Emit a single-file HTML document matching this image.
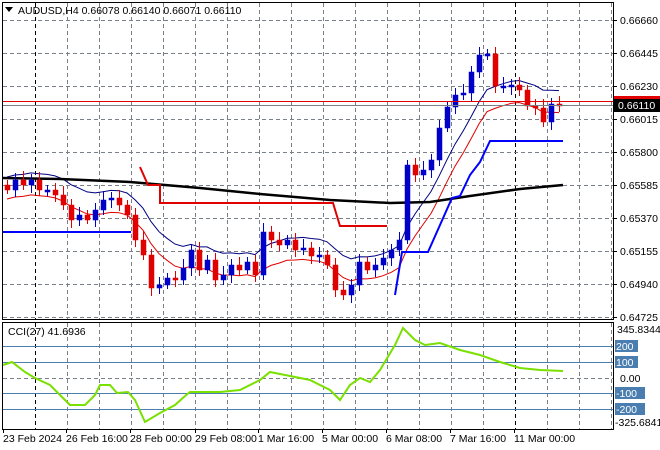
<!DOCTYPE html>
<html><head><meta charset="utf-8"><style>
body{margin:0;background:#fff;width:660px;height:450px;overflow:hidden;font-family:"Liberation Sans",sans-serif}
svg{display:block}
text{font-family:"Liberation Sans",sans-serif;font-size:10.5px;fill:#000}
</style></head><body>
<svg id="s" width="660" height="450" xmlns="http://www.w3.org/2000/svg">
<rect width="660" height="450" fill="#fff"/>
<g id="grid" stroke="#7a8088" stroke-dasharray="4,3" stroke-width="1"></g>
<g id="lines"></g>
<g id="c"></g>
<rect x="2.5" y="2.5" width="611" height="317" fill="none" stroke="#000"/>
<rect x="2.5" y="322.5" width="611" height="107" fill="none" stroke="#000"/>
<line x1="3" y1="101.5" x2="613" y2="101.5" stroke="#e00000"/>
<line x1="3" y1="105.5" x2="613" y2="105.5" stroke="#7a8088"/>
<g id="ax"></g>
<polygon points="5,7 13,7 9,12" fill="#000"/>
<text x="18" y="14">AUDUSD,H4  0.66078 0.66140 0.66071 0.66110</text>
<text x="8" y="335">CCI(27) 41.6936</text>
</svg>
<script>
var NS="http://www.w3.org/2000/svg";
function el(p,t,a,txt){var e=document.createElementNS(NS,t);for(var k in a)e.setAttribute(k,a[k]);if(txt!==undefined)e.textContent=txt;document.getElementById(p).appendChild(e);return e;}
// vertical grid
for(var x=35;x<=611;x+=32){var blk=(x==35||x==515);
 el('grid','line',{x1:x+.5,y1:3,x2:x+.5,y2:319,stroke:blk?'#000':'#7a8088'});
 el('grid','line',{x1:x+.5,y1:323,x2:x+.5,y2:429,stroke:blk?'#000':'#7a8088'});}
var prices=["0.66660","0.66445","0.66230","0.66015","0.65800","0.65585","0.65370","0.65155","0.64940","0.64725"];
for(var i=0;i<10;i++){var y=20+33*i;el('grid','line',{x1:3,y1:y+.5,x2:613,y2:y+.5});
 el('ax','line',{x1:613,y1:y+.5,x2:617,y2:y+.5,stroke:'#000'});
 el('ax','text',{x:620,y:y+4},prices[i]);}
// CCI levels
[[346,"200"],[362,"100"],[393,"-100"],[409,"-200"]].forEach(function(l){
 el('lines','line',{x1:3,y1:l[0]+.5,x2:613,y2:l[0]+.5,stroke:'#4a7eb0'});
 el('ax','rect',{x:615,y:l[0]-6,width:l[1].length*7+2,height:12,fill:'#4a7eb0'});
 el('ax','text',{x:616,y:l[0]+4,style:'fill:#fff'},l[1]);});
el('grid','line',{x1:3,y1:378.5,x2:613,y2:378.5});
el('ax','text',{x:617,y:333},"345.8344");
el('ax','text',{x:620,y:382},"0.00");
el('ax','text',{x:615,y:426},"-325.6841");
// price labels
el('ax','rect',{x:614,y:96,width:46,height:8,fill:'#e00000'});
el('ax','rect',{x:614,y:99,width:46,height:13,fill:'#000'});
el('ax','text',{x:618,y:109,style:'fill:#fff'},"0.66110");
// dates
var d=[[3,"23 Feb 2024"],[66,"26 Feb 16:00"],[130,"28 Feb 00:00"],[195,"29 Feb 08:00"],[258,"1 Mar 16:00"],[322,"5 Mar 00:00"],[386,"6 Mar 08:00"],[450,"7 Mar 16:00"],[514,"11 Mar 00:00"]];
d.forEach(function(a){el('ax','line',{x1:a[0]+.5,y1:429,x2:a[0]+.5,y2:433,stroke:'#000'});el('ax','text',{x:a[0],y:442},a[1]);});
// candles
var C=[190,180,185,180,190,190,195,205,220,215,220,210,200,198,205,215,240,255,288,285,278,280,268,250,270,260,280,275,265,270,262,275,232,240,245,240,250,248,256,255,265,290,295,285,262,270,265,258,250,240,165,175,170,160,128,107,95,93,72,55,54,86,86,85,90,106,108,122,104,105];
var o=185,ema=C[0],up=[],lo=[];
for(var i=0;i<C.length;i++){var x=7+8*i,c=C[i];var t=Math.min(o,c),b=Math.max(o,c);if(b-t<2){b=t+2;}
 var col=c<=o?'#0000c8':'#e00000';
 el('c','line',{x1:x+.5,y1:t-5-(i*7%5),x2:x+.5,y2:b+4+(i*3%5),stroke:col});
 el('c','rect',{x:x-2,y:t,width:5,height:b-t,fill:col,stroke:col,'stroke-width':0.5});
 ema=ema+(c-ema)*0.2;up.push(x+','+(ema-13).toFixed(1));lo.push(x+','+(ema+9).toFixed(1));o=c;}
el('lines','polyline',{points:up.join(' '),fill:'none',stroke:'#000080'});
el('lines','polyline',{points:lo.join(' '),fill:'none',stroke:'#e00000'});
el('lines','polyline',{points:"3,178 60,179 130,182 200,188 260,194 330,200 390,203 430,202 470,196 520,189 563,185",fill:'none',stroke:'#000','stroke-width':2.5});
el('lines','polyline',{points:"140,167 148,185 160,185 160,203 333,203 340,226 387,226",fill:'none',stroke:'#e00000','stroke-width':2});
el('lines','line',{x1:3,y1:232,x2:131,y2:232,stroke:'#0000ff','stroke-width':2});
el('lines','polyline',{points:"395,295 402,252 428,252 440,225 452,198 460,196 470,175 480,162 490,141 563,141",fill:'none',stroke:'#0000ff','stroke-width':2});
el('lines','polyline',{points:"3,365 12,362 25,372 35,378 50,385 55,390 65,400 70,405 85,405 95,395 100,385 110,385 117,393 128,392 135,400 145,422 160,413 175,405 185,396 190,392 220,392 240,390 260,380 270,372 285,375 310,380 330,390 340,400 350,385 360,378 370,382 380,370 395,345 403,328 415,340 425,345 440,343 460,350 480,355 500,362 520,368 540,370 563,371",fill:'none',stroke:'#7ae000','stroke-width':2});
</script>
</body></html>
